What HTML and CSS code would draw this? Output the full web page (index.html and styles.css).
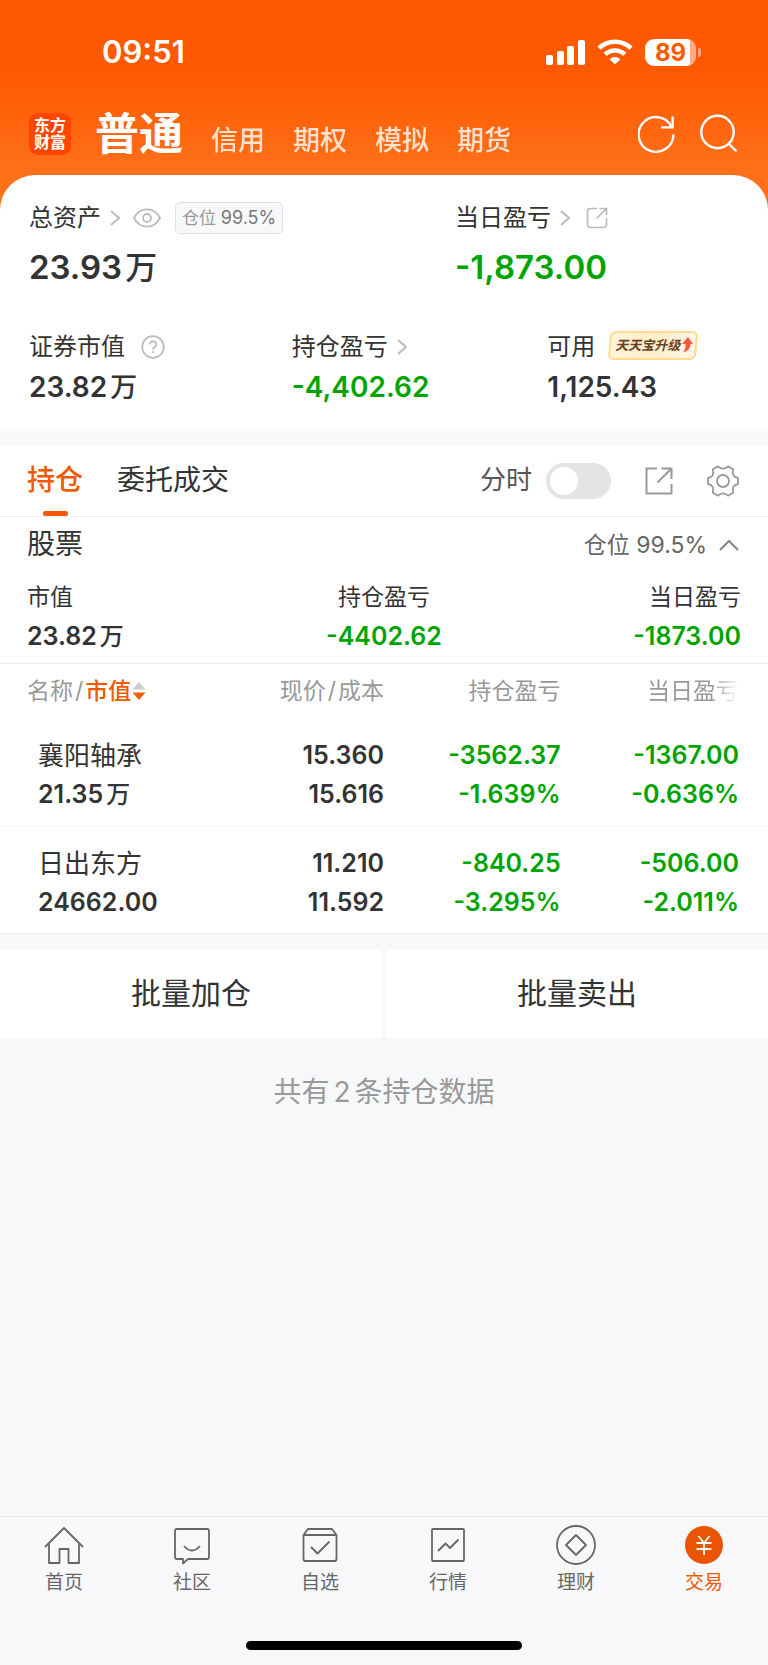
FILE: index.html
```html
<!DOCTYPE html>
<html lang="zh-CN">
<head>
  <title>交易 - 普通账户</title>
  <meta charset="UTF-8">
  <meta name="viewport" content="width=device-width, initial-scale=1.0">
  <link rel="stylesheet" href="styles.css">
</head>
<body>
  <header class="header">
    <div class="status-bar">
      <span class="time">09:51</span>
      <div class="status-icons">
        <svg width="39" height="25" viewBox="0 0 39 25" fill="#fff">
          <rect x="0" y="15" width="7" height="10" rx="2"/>
          <rect x="11" y="11" width="7" height="14" rx="2"/>
          <rect x="21" y="6" width="7" height="19" rx="2"/>
          <rect x="32" y="0" width="7" height="25" rx="2"/>
        </svg>
        <svg width="36" height="26" viewBox="0 0 36 26" fill="none" stroke="#fff" stroke-width="4.6">
          <path d="M2 9.2A23 23 0 0 1 34 9.2"/>
          <path d="M8.2 15.4A14.2 14.2 0 0 1 27.8 15.4"/>
          <path d="M18 25.5L12.6 20.2A8 8 0 0 1 23.4 20.2Z" fill="#fff" stroke="none"/>
        </svg>
        <div class="battery"><span>89</span></div>
      </div>
    </div>
    <div class="top-nav">
      <a class="logo" href="#">东方<br>财富</a>
      <nav class="accounts">
        <a class="active" href="#">普通</a>
        <a href="#">信用</a>
        <a href="#">期权</a>
        <a href="#">模拟</a>
        <a href="#">期货</a>
      </nav>
      <button class="icon-btn" aria-label="刷新">
        <svg width="38" height="40" viewBox="0 0 38 40" fill="none" stroke="#fff" stroke-width="2.4">
          <path d="M35.4 20.5A17.4 17.4 0 1 1 33.6 12.8"/>
          <path d="M34.6 2.5V13.4H23"/>
        </svg>
      </button>
      <button class="icon-btn" aria-label="搜索">
        <svg width="38" height="40" viewBox="0 0 38 40" fill="none" stroke="#fff" stroke-width="2.4">
          <circle cx="17.5" cy="18" r="16.2"/>
          <path d="M28.5 29.5L36.5 37.5"/>
        </svg>
      </button>
    </div>
  </header>

  <section class="assets">
    <div class="assets-main">
      <div>
        <div class="label">
          <a href="#">总资产</a>
          <svg class="arrow" width="10" height="16" viewBox="0 0 10 16"><path d="M1 1L9 8L1 15"/></svg>
          <button class="icon-btn eye" aria-label="隐藏金额">
            <svg width="28" height="20" viewBox="0 0 28 20" fill="none" stroke="#bbb" stroke-width="1.8">
              <path d="M1 10C7-1.5 21-1.5 27 10C21 21.5 7 21.5 1 10Z"/>
              <circle cx="14" cy="10" r="4"/>
            </svg>
          </button>
          <span class="ratio">仓位 <b>99.5%</b></span>
        </div>
        <div class="value big">23.93<span class="unit">万</span></div>
      </div>
      <div>
        <div class="label">
          <a href="#">当日盈亏</a>
          <svg class="arrow" width="10" height="16" viewBox="0 0 10 16"><path d="M1 1L9 8L1 15"/></svg>
          <button class="icon-btn share" aria-label="分享">
            <svg width="22" height="22" viewBox="0 0 22 22" fill="none" stroke="#bbb" stroke-width="1.7">
              <path d="M11 1.5H5Q1.500 1.5 1.5 5V17Q1.5 20.5 5 20.5H17Q20.5 20.5 20.5 17V11"/>
              <path d="M13.5 1.5H20.5V8M20.5 1.5L10.5 11.5"/>
            </svg>
          </button>
        </div>
        <div class="value big green">-1,873.00</div>
      </div>
    </div>
    <div class="assets-sub">
      <div>
        <div class="label">
          <span>证券市值</span>
          <button class="icon-btn help" aria-label="说明">
            <svg width="24" height="24" viewBox="0 0 24 24" fill="none" stroke="#bbb" stroke-width="1.7">
              <circle cx="12" cy="12" r="10.8"/>
              <path d="M8.8 9.6C8.8 5.4 15.3 5.4 15.3 9.4C15.3 11.8 12 11.8 12 14.8M12 16.3V18.2"/>
            </svg>
          </button>
        </div>
        <div class="value">23.82<span class="unit">万</span></div>
      </div>
      <div>
        <div class="label">
          <a href="#">持仓盈亏</a>
          <svg class="arrow" width="10" height="16" viewBox="0 0 10 16"><path d="M1 1L9 8L1 15"/></svg>
        </div>
        <div class="value green">-4,402.62</div>
      </div>
      <div>
        <div class="label">
          <span>可用</span>
          <a class="promo" href="#">天天宝升级<svg width="12" height="16" viewBox="0 0 12 16" fill="#f9593a"><path d="M7 0L12 7H9.5C9.5 11 7 14 2 15.5C4 13 5 10 4.5 7H1Z"/></svg></a>
        </div>
        <div class="value">1,125.43</div>
      </div>
    </div>
  </section>

  <section class="holdings">
    <div class="tabs">
      <button class="tab active">持仓</button>
      <button class="tab">委托成交</button>
      <label class="minute" for="minute">分时</label>
      <input class="switch" type="checkbox" id="minute">
      <button class="icon-btn" aria-label="导出">
        <svg width="28" height="28" viewBox="0 0 28 28" fill="none" stroke="#999" stroke-width="2">
          <path d="M12 1.5H1.5V26.5H26.5V17"/>
          <path d="M16.5 1.5H26.5V12M26.5 1.5L12.5 15.5"/>
        </svg>
      </button>
      <button class="icon-btn" aria-label="设置">
        <svg width="32" height="32" viewBox="0 0 32 32" fill="none" stroke="#999" stroke-width="1.8" stroke-linejoin="round">
          <path d="M31 13V19Q24 20.5 26.2 27.700L21 30.700Q16 26 11 30.700L5.800 27.700Q8 20.500 1 19V13Q8 11.500 5.800 4.300L11 1.300Q16 6 21 1.300L26.200 4.300Q24 11.500 31 13Z"/>
          <circle cx="16" cy="16" r="6"/>
        </svg>
      </button>
    </div>

    <div class="group">
      <h2>股票</h2>
      <button class="collapse">仓位 99.5%
        <svg width="20" height="12" viewBox="0 0 20 12" fill="none" stroke="#888" stroke-width="2.2"><path d="M1 11L10 2L19 11"/></svg>
      </button>
    </div>
    <div class="summary">
      <div>市值<strong>23.82<span class="unit">万</span></strong></div>
      <div>持仓盈亏<strong class="green">-4402.62</strong></div>
      <div>当日盈亏<strong class="green">-1873.00</strong></div>
    </div>

    <table class="stocks">
      <thead>
        <tr>
          <th>名称<span class="slash">/</span><span class="sorted">市值</span><svg width="14" height="20" viewBox="0 0 14 20"><path d="M7 1L13.5 8.5H0.5Z" fill="#ccc"/><path d="M7 19L13.5 11.5H0.5Z" fill="#fa5a0a"/></svg></th>
          <th>现价<span class="slash">/</span>成本</th>
          <th>持仓盈亏</th>
          <th><span class="fade">当日盈亏</span></th>
        </tr>
      </thead>
      <tbody>
        <tr>
          <td><span class="name">襄阳轴承</span>21.35<span class="unit">万</span></td>
          <td>15.360<br>15.616</td>
          <td class="green">-3562.37<br>-1.639%</td>
          <td class="green">-1367.00<br>-0.636%</td>
        </tr>
        <tr>
          <td><span class="name">日出东方</span>24662.00</td>
          <td>11.210<br>11.592</td>
          <td class="green">-840.25<br>-3.295%</td>
          <td class="green">-506.00<br>-2.011%</td>
        </tr>
      </tbody>
    </table>
  </section>

  <div class="batch">
    <button>批量加仓</button>
    <button>批量卖出</button>
  </div>
  <p class="total">共有<span class="count">2</span>条持仓数据</p>

  <footer class="tab-bar">
    <nav>
      <a href="#">
        <svg width="40" height="40" viewBox="0 0 40 40"><path d="M1 22L20 3L39 22M5 18.5V38H15.5V24H24.5V38H35V18.5"/></svg>
        首页
      </a>
      <a href="#">
        <svg width="40" height="40" viewBox="0 0 40 40"><path d="M5 4H35Q37 4 37 6V32Q37 34 35 34H16L11 38.5V34H5Q3 34 3 32V6Q3 4 5 4ZM12 21Q20 30 28 21"/></svg>
        社区
      </a>
      <a href="#">
        <svg width="40" height="40" viewBox="0 0 40 40"><path d="M3.5 10L8 4H32L36.5 10V34Q36.5 36 34.5 36H5.5Q3.5 36 3.5 34ZM3.5 10H36.5M11 22L17.5 28.5L29.5 16.5"/></svg>
        自选
      </a>
      <a href="#">
        <svg width="40" height="40" viewBox="0 0 40 40"><rect x="4" y="4" width="32" height="32" rx="1"/><path d="M10 26L17.5 18.5L22 23L30.5 14.5"/></svg>
        行情
      </a>
      <a href="#">
        <svg width="40" height="40" viewBox="0 0 40 40"><circle cx="20" cy="20" r="19"/><path d="M20 10L30 20L20 30L10 20Z"/></svg>
        理财
      </a>
      <a class="active" href="#">
        <svg width="40" height="40" viewBox="0 0 40 40"><circle cx="20" cy="20" r="19"/><path d="M14.5 11L20 18L25.5 11M20 18V30M12.5 18H27.5M12.5 24H27.5"/></svg>
        交易
      </a>
    </nav>
    <div class="home-indicator"></div>
  </footer>
</body>
</html>
```

FILE: styles.css
```css
* {
  box-sizing: border-box;
}

body {
  display: flex;
  flex-direction: column;
  min-height: 100vh;
  margin: 0;
  background-color: #f7f8fa;
  font-family: Inter, "Noto Sans CJK SC", sans-serif;
  line-height: 1.4;
  color: #333;
}

a {
  color: inherit;
  text-decoration: none;
}

button {
  padding: 0;
  border: none;
  background: none;
  font-family: inherit;
  line-height: inherit;
  color: inherit;
  cursor: pointer;
}

svg {
  display: block;
  flex-shrink: 0;
}

.green {
  color: #00a400;
}

.unit {
  margin-left: 3px;
  font-size: 24px;
  font-weight: 500;
  line-height: 1;
}

.icon-btn {
  display: flex;
}

/* Header */
.header {
  padding-bottom: 46px;
  background: linear-gradient(#ff5900 70px, #ff7019 170px);
  color: #fff;
}

.status-bar {
  display: flex;
  align-items: center;
  justify-content: space-between;
  height: 104px;
  padding: 0 67px 0 102px;
}

.time {
  font-size: 31px;
  font-weight: 600;
}

.status-icons {
  display: flex;
  align-items: center;
  gap: 12px;
}

.battery {
  position: relative;
  width: 51px;
  height: 27px;
  margin-right: 5px;
  border-radius: 9px;
  background: linear-gradient(90deg, #fff 89%, #ffab84 89%);
  color: #ff5900;
  font-size: 24px;
  font-weight: 700;
  line-height: 27px;
  text-align: center;
}

.battery::after {
  content: "";
  position: absolute;
  top: 9px;
  right: -5px;
  width: 3px;
  height: 9px;
  border-radius: 0 4px 4px 0;
  background-color: #ffab84;
}

.top-nav {
  display: flex;
  align-items: center;
  gap: 24px;
  height: 60px;
  padding: 0 30px 0 29px;
}

.logo {
  width: 42px;
  height: 42px;
  padding-top: 4px;
  border-radius: 9px;
  background-color: #ff4500;
  font-size: 16px;
  font-weight: 700;
  line-height: 17px;
  text-align: center;
}

.accounts {
  display: flex;
  flex: 1;
  align-items: baseline;
  gap: 28px;
  padding-top: 6px;
  font-size: 27px;
  line-height: 60px;
  white-space: nowrap;
}

.accounts a {
  opacity: 0.8;
  font-weight: 500;
}

.accounts .active {
  opacity: 1;
  font-size: 44px;
  font-weight: 700;
}

/* Assets */
.assets {
  margin-top: -35px;
  padding: 27px 29px 26px;
  border-radius: 35px 35px 0 0;
  background-color: #fff;
}

.assets-main {
  display: grid;
  grid-template-columns: 3fr 2fr;
}

.assets-sub {
  display: grid;
  grid-template-columns: 37fr 36fr 27fr;
  margin-top: 42px;
}

.label {
  display: flex;
  align-items: center;
  height: 32px;
  font-size: 24px;
  white-space: nowrap;
}

.arrow {
  margin-left: 9px;
  fill: none;
  stroke: #bbb;
  stroke-width: 2;
}

.eye {
  margin-left: 13px;
}

.share {
  margin-left: 16px;
}

.help {
  margin-left: 16px;
}

.ratio {
  margin-left: 14px;
  padding: 0 6px;
  border: 1px solid #dfe0e4;
  border-radius: 5px;
  background-color: #f7f8fa;
  color: #999;
  font-size: 17px;
  line-height: 30px;
}

.ratio b {
  color: #777;
  font-size: 18px;
  font-weight: 400;
}

.promo {
  position: relative;
  z-index: 0;
  display: flex;
  align-items: center;
  gap: 1px;
  height: 29px;
  margin: 0 0 4px 14px;
  padding: 0 4px 0 6px;
  color: #6b3f20;
  font-size: 13px;
  font-style: italic;
  font-weight: 700;
}

.promo::before {
  content: "";
  position: absolute;
  inset: 0;
  z-index: -1;
  border: 2px solid #ffdb8a;
  border-radius: 6px;
  background: linear-gradient(90deg, #fff3d9, #ffeecb 50%, #fff6e6);
  transform: skewX(-5deg);
}

.value {
  margin-top: 6px;
  font-size: 28px;
  font-weight: 600;
  line-height: 36px;
}

.value .unit {
  font-size: 27px;
}

.value.big {
  margin-top: 11px;
  font-size: 33px;
  line-height: 44px;
}

.value.big .unit {
  font-size: 32px;
}

/* Holdings */
.holdings {
  margin-top: 14px;
  background-color: #fff;
}

.tabs {
  display: flex;
  align-items: center;
  height: 72px;
  padding: 0 29px 0 27px;
  border-bottom: 1px solid #f0f1f4;
}

.tab {
  position: relative;
  height: 71px;
  margin-right: 34px;
  font-size: 28px;
}

.tab.active {
  color: #f05a00;
  font-weight: 500;
}

.tab.active::after {
  content: "";
  position: absolute;
  bottom: 0;
  left: calc(50% - 12px);
  width: 25px;
  height: 5px;
  border-radius: 2px;
  background-color: #f05a00;
}

.minute {
  margin-left: auto;
  color: #555;
  font-size: 26px;
}

.switch {
  appearance: none;
  width: 65px;
  height: 36px;
  margin: 0 0 0 14px;
  padding: 4px;
  border-radius: 18px;
  background-color: #e4e4e6;
  cursor: pointer;
}

.switch::before {
  content: "";
  display: block;
  width: 28px;
  height: 28px;
  border-radius: 50%;
  background-color: #fff;
}

.switch:checked {
  background-color: #f05a00;
}

.switch:checked::before {
  margin-left: auto;
}

.tabs .icon-btn {
  margin-left: 34px;
}

.group {
  display: flex;
  align-items: center;
  justify-content: space-between;
  height: 56px;
  padding: 0 29px 0 27px;
}

.group h2 {
  margin: 0;
  font-size: 28px;
  font-weight: 400;
}

.collapse {
  display: flex;
  align-items: center;
  gap: 12px;
  color: #666;
  font-size: 23px;
}

.summary {
  display: grid;
  grid-template-columns: repeat(3, 1fr);
  padding: 5px 27px 7px;
  border-bottom: 1px solid #ececef;
  font-size: 23px;
  line-height: 39px;
  text-align: center;
}

.summary div:first-child {
  text-align: left;
}

.summary div:last-child {
  text-align: right;
}

.summary strong {
  display: block;
  font-size: 25px;
  font-weight: 600;
}

.stocks {
  width: 100%;
  border-collapse: collapse;
  table-layout: fixed;
  text-align: right;
}

.stocks th {
  width: 23%;
  height: 55px;
  padding: 0;
  color: #999;
  font-size: 23px;
  font-weight: 400;
  white-space: nowrap;
}

.stocks th:first-child {
  width: 27%;
  padding-left: 27px;
  text-align: left;
}

.stocks th:last-child {
  width: 27%;
}

.stocks th svg {
  display: inline-block;
  margin-left: 1px;
  vertical-align: -2px;
}

.slash {
  margin: 0 2px;
}

.sorted {
  color: #f05a00;
  font-weight: 500;
}

.fade {
  -webkit-mask-image: linear-gradient(90deg, #000 70%, transparent);
  mask-image: linear-gradient(90deg, #000 70%, transparent);
}

.stocks td {
  height: 107px;
  padding: 17px 0 11px;
  border-bottom: 1px solid #f3f4f6;
  font-size: 25px;
  font-weight: 600;
  line-height: 39px;
}

.stocks td:first-child {
  padding-left: 38px;
  text-align: left;
}

.stocks th:last-child,
.stocks td:last-child {
  padding-right: 29px;
}

.name {
  display: block;
  font-size: 26px;
  font-weight: 400;
}

.batch {
  display: grid;
  grid-template-columns: 1fr 1fr;
  gap: 4px;
  margin-top: 15px;
}

.batch button {
  height: 89px;
  background-color: #fff;
  font-size: 30px;
}

.total {
  margin: 34px 0 0;
  color: #999;
  font-size: 28px;
  line-height: 40px;
  text-align: center;
}

.count {
  margin: 0 4px;
}

/* Bottom tab bar */
.tab-bar {
  margin-top: auto;
  padding-bottom: 15px;
  border-top: 1px solid #e8e9eb;
  background-color: #f8f8fb;
}

.tab-bar nav {
  display: flex;
  padding-top: 8px;
}

.tab-bar a {
  display: flex;
  flex: 1;
  flex-direction: column;
  align-items: center;
  gap: 5px;
  color: #666;
  font-size: 19px;
  line-height: 26px;
}

.tab-bar svg {
  fill: none;
  stroke: #666;
  stroke-width: 1.8;
  stroke-linejoin: round;
}

.tab-bar .active {
  color: #f05a00;
}

.tab-bar .active svg {
  stroke: #fff;
}

.tab-bar .active circle {
  fill: #ea5504;
  stroke: none;
}

.home-indicator {
  width: 36%;
  height: 9px;
  margin: 45px auto 0;
  border-radius: 5px;
  background-color: #000;
}
```
